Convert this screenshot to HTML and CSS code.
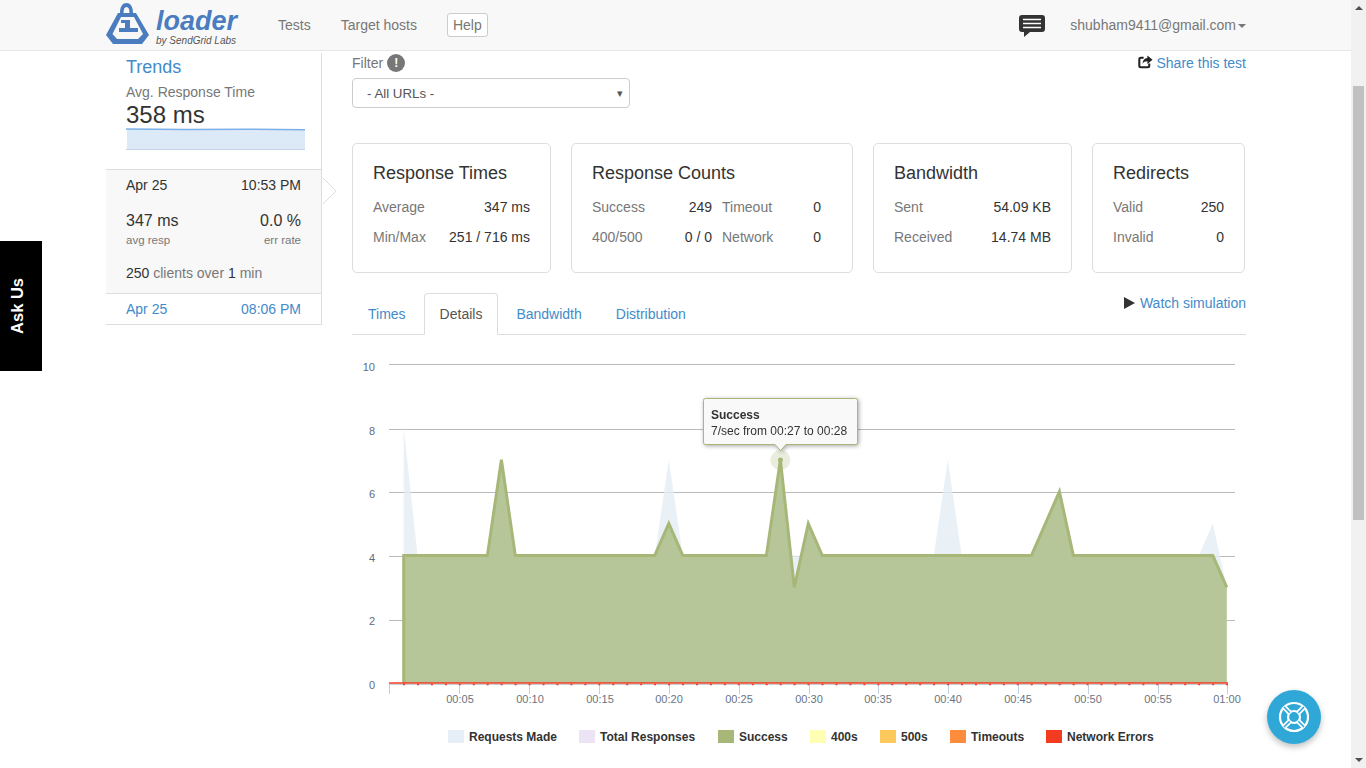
FILE: index.html
```html
<!DOCTYPE html>
<html lang="en">
<head>
  <meta charset="UTF-8" />
  <meta name="viewport" content="width=device-width, initial-scale=1.0" />
  <title>Loader - Test results</title>
  <link rel="stylesheet" href="styles.css">
</head>
<body>
  <div class="page">
    <!-- Top navigation -->
    <nav class="navbar">
      <div class="container nav-inner">
        <a class="brand" href="#">
          <svg class="brand-icon" viewBox="0 0 44 42" width="44" height="42">
            <path class="logo-blue" fill-rule="evenodd" d="M14 10 C14 3 17 0 20.500 0 C24 0 27 3 27 10 L30 10 L43 32 L36 41 L7 41 L0 32 L12 10 Z M17.500 10 L23.500 10 C23.500 6 22.500 4 20.500 4 C18.500 4 17.500 6 17.500 10 Z M15 14 L6.500 31 L11 36 L32 36 L37 31 L28 14 Z"/>
            <path class="logo-blue" d="M15 17 H24 V25 H32 V29 H13 V25 H19 V20 H15 Z"/>
          </svg>
          <span class="brand-text">
            <span class="brand-name">loader</span>
            <span class="brand-sub">by SendGrid Labs</span>
          </span>
        </a>
        <a class="nav-link" href="#">Tests</a>
        <a class="nav-link" href="#">Target hosts</a>
        <a class="nav-help" href="#">Help</a>
        <svg class="chat-icon" viewBox="0 0 26 22" width="26" height="22">
          <path d="M3 0 H23 Q26 0 26 3 V14 Q26 17 23 17 H11 L5 22 V17 H3 Q0 17 0 14 V3 Q0 0 3 0 Z" fill="#333"/>
          <path d="M4 4.500 H22 M4 8.500 H22 M4 12.500 H22" stroke="#fff" stroke-width="1.600"/>
        </svg>
        <a class="nav-user" href="#">shubham9411@gmail.com<span class="caret"></span></a>
      </div>
    </nav>

    <div class="container main">
      <!-- Left column with test history -->
      <aside class="sidebar">
        <div class="trends">
          <a class="trends-title" href="#">Trends</a>
          <div class="trends-label">Avg. Response Time</div>
          <div class="trends-value">358 ms</div>
          <svg class="sparkline" viewBox="0 0 179 22" width="179" height="22">
            <path d="M1 1 L60 1.500 L120 1.200 L179 1.800 L179 21 L1 21 Z" fill="#dce9f7"/>
            <path d="M0 1 L60 1.500 L120 1.200 L179 1.800" fill="none" stroke="#7cb0e8" stroke-width="1.600"/>
            <path d="M0 21.500 H179" stroke="#c4d4e6"/>
          </svg>
        </div>

        <div class="run run-active">
          <div class="run-row"><span>Apr 25</span><span>10:53 PM</span></div>
          <div class="run-row run-stats"><span>347 ms</span><span>0.0 %</span></div>
          <div class="run-row run-caption"><span>avg resp</span><span>err rate</span></div>
          <div class="run-clients"><b>250</b> clients over <b>1</b> min</div>
          <svg class="run-arrow" viewBox="0 0 16 28" width="16" height="28">
            <path d="M1 1 L14 14 L1 27" fill="#fff" stroke="#ddd"/>
          </svg>
        </div>
        <a class="run-row run-link" href="#"><span>Apr 25</span><span>08:06 PM</span></a>
      </aside>

      <main class="content">
        <div class="filter-row">
          <div>
            <div class="filter-label">Filter <span class="info-badge">!</span></div>
            <div class="select">- All URLs -<span class="select-arrow">&#9662;</span></div>
          </div>
          <a class="share" href="#">
            <svg viewBox="0 0 16 14" width="15" height="14">
              <path d="M12 8.500 V11 Q12 12.600 10.400 12.600 H3 Q1.400 12.600 1.400 11 V4 Q1.400 2.400 3 2.400 H6" fill="none" stroke="#222" stroke-width="2.200"/>
              <path d="M10 0 L15.500 4.500 L10 9 V6.300 C7.500 6.300 6 7 5 9 C5 5.500 7 3 10 2.800 Z" fill="#222"/>
            </svg>
            Share this test
          </a>
        </div>

        <!-- Summary cards -->
        <div class="cards">
          <section class="card card-times">
            <h3>Response Times</h3>
            <div class="stat"><span>Average</span><b>347 ms</b></div>
            <div class="stat"><span>Min/Max</span><b>251 / 716 ms</b></div>
          </section>
          <section class="card card-counts">
            <h3>Response Counts</h3>
            <div class="stat-grid">
              <span>Success</span><b>249</b><span class="stat-second">Timeout</span><b>0</b>
              <span>400/500</span><b>0 / 0</b><span class="stat-second">Network</span><b>0</b>
            </div>
          </section>
          <section class="card card-bandwidth">
            <h3>Bandwidth</h3>
            <div class="stat"><span>Sent</span><b>54.09 KB</b></div>
            <div class="stat"><span>Received</span><b>14.74 MB</b></div>
          </section>
          <section class="card card-redirects">
            <h3>Redirects</h3>
            <div class="stat"><span>Valid</span><b>250</b></div>
            <div class="stat"><span>Invalid</span><b>0</b></div>
          </section>
        </div>

        <div class="tabs">
          <a class="tab" href="#">Times</a>
          <a class="tab tab-active" href="#">Details</a>
          <a class="tab" href="#">Bandwidth</a>
          <a class="tab" href="#">Distribution</a>
          <a class="watch" href="#"><span class="play"></span>Watch simulation</a>
        </div>

        <svg class="chart" viewBox="352 335 893 425" width="893" height="425">
          <g class="grid">
            <path d="M389 364.500 H1235"/>
            <path d="M389 429.500 H1235"/>
            <path d="M389 492.500 H1235"/>
            <path d="M389 556.500 H1235"/>
            <path d="M389 620.500 H1235"/>
          </g>
          <g class="y-labels">
            <text x="375" y="371">10</text>
            <text x="375" y="435">8</text>
            <text x="375" y="498">6</text>
            <text x="375" y="562">4</text>
            <text x="375" y="625">2</text>
            <text x="375" y="689">0</text>
          </g>

          <path class="area-requests" d="M403.700 683 L403.700 427.800 L417.600 555.400 L654.800 555.400 L668.800 459.700 L682.700 555.400 L933.800 555.400 L947.800 459.700 L961.700 555.400 L1198.800 555.400 L1212.800 523.500 L1226.800 587.300 L1226.800 683 Z"/>
          <path class="area-success" d="M403.700 683 L403.700 555.400 L487.400 555.400 L501.400 459.700 L515.300 555.400 L654.800 555.400 L668.800 523.500 L682.700 555.400 L766.400 555.400 L780.400 459.700 L794.300 587.300 L808.300 523.500 L822.200 555.400 L1031.500 555.400 L1059.400 491.600 L1073.300 555.400 L1212.800 555.400 L1226.800 587.300 L1226.800 683 Z"/>
          <path class="line-success" d="M403.700 683 L403.700 555.400 L487.400 555.400 L501.400 459.700 L515.300 555.400 L654.800 555.400 L668.800 523.500 L682.700 555.400 L766.400 555.400 L780.400 459.700 L794.300 587.300 L808.300 523.500 L822.200 555.400 L1031.500 555.400 L1059.400 491.600 L1073.300 555.400 L1212.800 555.400 L1226.800 587.300"/>

          <g class="x-axis">
            <path d="M389 684.500 H1228"/>
            <path d="M389.500 684 V694 M459.500 684 V694 M529.500 684 V694 M599.500 684 V694 M669.500 684 V694 M739.500 684 V694 M809.500 684 V694 M878.500 684 V694 M948.500 684 V694 M1018.500 684 V694 M1088.500 684 V694 M1158.500 684 V694 M1227.500 684 V694"/>
          </g>
          <path class="line-errors" d="M389 683 H1228"/>
          <path class="dots-errors" d="M403 684.500 H1228"/>

          <g class="x-labels">
            <text x="460" y="703">00:05</text>
            <text x="530" y="703">00:10</text>
            <text x="600" y="703">00:15</text>
            <text x="669" y="703">00:20</text>
            <text x="739" y="703">00:25</text>
            <text x="809" y="703">00:30</text>
            <text x="878" y="703">00:35</text>
            <text x="948" y="703">00:40</text>
            <text x="1018" y="703">00:45</text>
            <text x="1088" y="703">00:50</text>
            <text x="1158" y="703">00:55</text>
            <text x="1227" y="703">01:00</text>
          </g>

          <g class="legend">
            <rect x="448" y="730" width="16" height="13" fill="#e6eff7"/><text x="469" y="741">Requests Made</text>
            <rect x="579" y="730" width="16" height="13" fill="#ece4f5"/><text x="600" y="741">Total Responses</text>
            <rect x="718" y="730" width="16" height="13" fill="#a6b778"/><text x="739" y="741">Success</text>
            <rect x="810" y="730" width="16" height="13" fill="#ffffb3"/><text x="831" y="741">400s</text>
            <rect x="880" y="730" width="16" height="13" fill="#fec95c"/><text x="901" y="741">500s</text>
            <rect x="950" y="730" width="16" height="13" fill="#fd8d3c"/><text x="971" y="741">Timeouts</text>
            <rect x="1046" y="730" width="16" height="13" fill="#f23b20"/><text x="1067" y="741">Network Errors</text>
          </g>

          <circle cx="780.400" cy="460" r="10" fill="#a6b778" opacity="0.25"/>
          <circle cx="780.400" cy="460" r="2.500" fill="#a6b778"/>

          <g class="tooltip">
            <path class="tooltip-box" d="M705.500 398.500 H855.500 Q857.500 398.500 857.500 400.500 V442.500 Q857.500 444.500 855.500 444.500 H786 L780.500 450.500 L775 444.500 H705.500 Q703.500 444.500 703.500 442.500 V400.500 Q703.500 398.500 705.500 398.500 Z"/>
            <text class="tooltip-title" x="711" y="419">Success</text>
            <text class="tooltip-text" x="711" y="435">7/sec from 00:27 to 00:28</text>
          </g>
        </svg>
      </main>
    </div>
  </div>

  <!-- Things that float over the page -->
  <div class="ask-us"><span>Ask Us</span></div>
  <a class="help-fab" href="#">
    <svg viewBox="0 0 32 32" width="32" height="32" fill="none" stroke="#fff">
      <circle cx="16" cy="16" r="14" stroke-width="2.200"/>
      <circle cx="16" cy="16" r="6" stroke-width="2.200"/>
      <path d="M6 6 L11.700 11.700 M26 6 L20.300 11.700 M6 26 L11.700 20.300 M26 26 L20.300 20.300" stroke-width="5"/>
      <path d="M6 6 L11.700 11.700 M26 6 L20.300 11.700 M6 26 L11.700 20.300 M26 26 L20.300 20.300" stroke="#2fa8d8" stroke-width="1.600"/>
    </svg>
  </a>
  <div class="scrollbar">
    <span class="scroll-up"></span>
    <span class="scroll-thumb"></span>
    <span class="scroll-down"></span>
  </div>
</body>
</html>
```

FILE: styles.css
```css
/* Global Styles */
html, body {
  height: 100%;
  margin: 0;
  overflow: hidden;
}

body {
  font-family: "Liberation Sans", Arial, sans-serif;
  font-size: 14px;
  line-height: 20px;
  color: #333;
  background: #fff;
}

a {
  color: #428bca;
  text-decoration: none;
}

.page {
  width: 1351px;
}

.container {
  width: 1140px;
  margin-left: 106px;
}

/* Navbar */
.navbar {
  height: 50px;
  background: #f8f8f8;
  border-bottom: 1px solid #e7e7e7;
}

.nav-inner {
  display: flex;
  align-items: center;
  height: 50px;
}

.brand {
  display: flex;
  width: 172px;
  height: 50px;
  padding-top: 3px;
  box-sizing: border-box;
}

.brand-icon {
  flex: none;
}

.logo-blue {
  fill: #4a7dbf;
}

.brand-text {
  display: flex;
  flex-direction: column;
  margin-left: 6px;
  margin-top: 3px;
}

.brand-name {
  font-size: 27px;
  font-weight: 700;
  font-style: italic;
  line-height: 30px;
  color: #4a7dbf;
}

.brand-sub {
  font-size: 10px;
  font-style: italic;
  line-height: 10px;
  color: #555;
}

.nav-link {
  color: #777;
  margin-right: 30px;
}

.nav-help {
  color: #777;
  padding: 1px 5px;
  border: 1px solid #ccc;
  border-radius: 3px;
  background: #fff;
}

.chat-icon {
  margin-left: auto;
  margin-right: 25px;
  margin-top: 2px;
}

.nav-user {
  color: #777;
}

.caret {
  display: inline-block;
  margin-left: 2px;
  vertical-align: middle;
  border-top: 4px solid #777;
  border-left: 4px solid transparent;
  border-right: 4px solid transparent;
}

/* Layout */
.main {
  display: flex;
  align-items: flex-start;
}

.sidebar {
  width: 215px;
  flex: none;
  margin-top: 2px;
  border-right: 1px solid #ddd;
  border-bottom: 1px solid #ddd;
  padding-top: 4px;
}

.content {
  flex: 1;
  margin-left: 30px;
  min-width: 0;
}

/* Sidebar */
.trends {
  padding: 0 20px;
  height: 112px;
}

.trends-title {
  display: block;
  font-size: 18px;
  color: #428bca;
}

.trends-label {
  margin-top: 5px;
  color: #777;
}

.trends-value {
  font-size: 24px;
  line-height: 26px;
}

.sparkline {
  display: block;
}

.run-row {
  display: flex;
  justify-content: space-between;
}

.run {
  position: relative;
  background: #f8f8f8;
  border-top: 1px solid #ddd;
  border-bottom: 1px solid #ddd;
  padding: 5px 20px 9px;
  height: 109px;
}

.run-stats {
  margin-top: 16px;
  font-size: 16px;
}

.run-caption {
  font-size: 11.5px;
  color: #777;
  margin-top: -1px;
}

.run-clients {
  margin-top: 13px;
  color: #777;
}

.run-clients b {
  font-weight: normal;
  color: #333;
}

.run-arrow {
  position: absolute;
  left: 216px;
  top: 7px;
}

.run-link {
  padding: 5px 20px;
}

/* Filter */
.filter-row {
  display: flex;
  justify-content: space-between;
  height: 90px;
  padding-top: 2px;
}

.filter-label {
  display: flex;
  align-items: center;
  gap: 4px;
  color: #777;
}

.info-badge {
  width: 18px;
  height: 18px;
  border-radius: 50%;
  background: #777;
  color: #fff;
  font-size: 12px;
  font-weight: 700;
  line-height: 18px;
  text-align: center;
}

.select {
  position: relative;
  box-sizing: border-box;
  width: 278px;
  height: 30px;
  margin-top: 5px;
  padding: 5px 14px;
  border: 1px solid #ccc;
  border-radius: 4px;
  font-size: 13.3px;
  color: #555;
}

.select-arrow {
  position: absolute;
  right: 6px;
  top: 4px;
  font-size: 11px;
}

.share svg {
  vertical-align: -1px;
}

/* Summary cards */
.cards {
  display: flex;
  gap: 20px;
}

.card {
  box-sizing: border-box;
  height: 130px;
  padding: 19px 20px 0;
  border: 1px solid #ddd;
  border-radius: 5px;
}

.card-times { width: 199px; }
.card-counts { width: 282px; }
.card-bandwidth { width: 199px; }
.card-redirects { width: 153px; }

.card h3 {
  margin: 0 0 14px;
  font-size: 18px;
  font-weight: normal;
  line-height: 20px;
}

.stat {
  display: flex;
  justify-content: space-between;
  height: 30px;
  line-height: 20px;
}

.stat span,
.stat-grid span {
  color: #777;
}

.stat b,
.stat-grid b {
  font-weight: normal;
  text-align: right;
}

.stat-grid {
  display: grid;
  grid-template-columns: 80px 40px 80px 29px;
  grid-auto-rows: 30px;
}

.stat-second {
  padding-left: 10px;
}

/* Tabs */
.tabs {
  display: flex;
  height: 41px;
  margin-top: 20px;
  border-bottom: 1px solid #ddd;
  position: relative;
}

.tab {
  height: 42px;
  box-sizing: border-box;
  padding: 10px 15px;
  margin-right: 2px;
  border: 1px solid transparent;
  border-radius: 4px 4px 0 0;
}

.tab-active {
  color: #555;
  background: #fff;
  border-color: #ddd #ddd #fff;
}

.watch {
  margin-left: auto;
  height: 20px;
}

.play {
  display: inline-block;
  margin-right: 5px;
  vertical-align: -1px;
  border-left: 11px solid #333;
  border-top: 6px solid transparent;
  border-bottom: 6px solid transparent;
}

/* Chart */
.chart {
  display: block;
  font-family: "Liberation Sans", Arial, sans-serif;
}

.grid path {
  stroke: #bbb;
  fill: none;
  shape-rendering: crispEdges;
}

.y-labels text {
  font-size: 11px;
  fill: #5f6b7c;
  text-anchor: end;
}

.x-labels text {
  font-size: 11px;
  fill: #6a7482;
  text-anchor: middle;
}

.area-requests {
  fill: #e4edf5;
  fill-opacity: 0.8;
}

.area-success {
  fill: #b6c698;
}

.line-success {
  fill: none;
  stroke: #a6b778;
  stroke-width: 3;
  stroke-linejoin: miter;
}

.x-axis path {
  stroke: #c0d0e0;
  fill: none;
  shape-rendering: crispEdges;
}

.line-errors {
  stroke: #f23b20;
  stroke-width: 1.5;
}

.dots-errors {
  stroke: #f23b20;
  stroke-width: 1.5;
  stroke-dasharray: 2 11.95;
}

.legend text {
  font-size: 12px;
  font-weight: 700;
  fill: #333;
}

.tooltip {
  filter: drop-shadow(1px 1px 2px rgba(0, 0, 0, 0.35));
}

.tooltip-box {
  fill: #f9f9f9;
  stroke: #a6b778;
}

.tooltip-title {
  font-size: 12px;
  font-weight: 700;
  fill: #333;
}

.tooltip-text {
  font-size: 12px;
  fill: #333;
}

/* Floating widgets */
.ask-us {
  position: fixed;
  left: 0;
  top: 241px;
  width: 42px;
  height: 130px;
  background: #000;
  color: #fff;
  display: flex;
  align-items: center;
  padding-left: 7px;
  box-sizing: border-box;
  font-size: 16.5px;
  font-weight: 700;
}

.ask-us span {
  writing-mode: vertical-rl;
  transform: rotate(180deg);
}

.help-fab {
  position: fixed;
  left: 1267px;
  top: 690px;
  width: 54px;
  height: 54px;
  border-radius: 50%;
  background: #2fa8d8;
  box-shadow: 0 3px 6px rgba(0, 0, 0, 0.25);
  display: flex;
  align-items: center;
  justify-content: center;
}

.scrollbar {
  position: fixed;
  right: 0;
  top: 0;
  width: 15px;
  height: 768px;
  background: #f1f1f1;
}

.scroll-thumb {
  position: absolute;
  left: 2px;
  top: 86px;
  width: 11px;
  height: 434px;
  background: #c1c1c1;
}

.scroll-up,
.scroll-down {
  position: absolute;
  left: 4px;
  border-left: 4px solid transparent;
  border-right: 4px solid transparent;
}

.scroll-up {
  top: 6px;
  border-bottom: 4px solid #505050;
}

.scroll-down {
  bottom: 6px;
  border-top: 4px solid #505050;
}
```
